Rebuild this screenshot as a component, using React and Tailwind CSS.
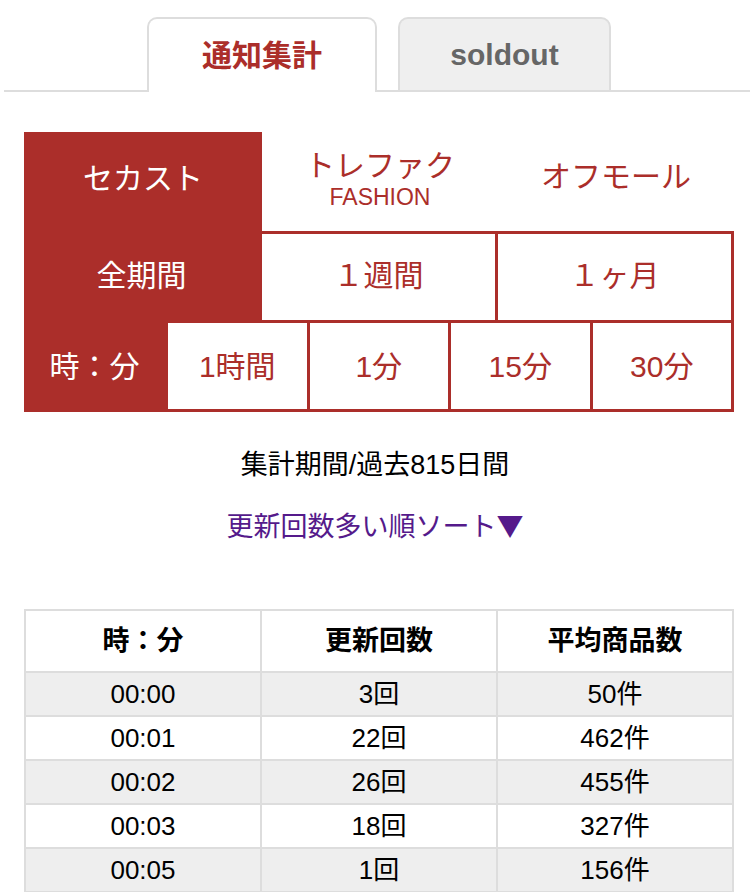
import React from "react";

const red = "text-[#ab2e2a]";

const rows = [
  ["00:00", "3回", "50件"],
  ["00:01", "22回", "462件"],
  ["00:02", "26回", "455件"],
  ["00:03", "18回", "327件"],
  ["00:05", "1回", "156件"],
];

const App = () => {
  return (
    <div className="min-h-[892px] bg-white font-['Liberation_Sans','Noto_Sans_CJK_JP',sans-serif]">
      {/* Tabs */}
      <div className="ml-1 pl-1 pt-[17px] flex justify-center gap-[21px] border-b-2 border-[#dddddd]">
        <div className="w-[230px] h-[75px] -mb-[2px] bg-white border-2 border-b-0 border-[#dddddd] rounded-t-[10px] flex items-center justify-center">
          <span className={`text-[30px] font-bold ${red}`}>通知集計</span>
        </div>
        <div className="w-[213px] h-[73px] bg-[#efefef] border-2 border-b-0 border-[#dddddd] rounded-t-[10px] flex items-center justify-center">
          <span className="text-[30px] font-bold text-[#666666]">soldout</span>
        </div>
      </div>

      {/* Filters */}
      <div className="ml-6 w-[710px] mt-[40px]">
        {/* Store row */}
        <div className="flex h-[99px]">
          <div className="w-[238px] bg-[#ab2e2a] text-white text-[30px] flex items-center justify-center pb-[6px]">
            セカスト
          </div>
          <div className={`flex-1 flex flex-col items-center justify-center leading-tight pb-[4px] ${red}`}>
            <span className="text-[30px]">トレファク</span>
            <span className="text-[23px] -mt-[1px]">FASHION</span>
          </div>
          <div className={`flex-1 flex items-center justify-center text-[30px] pb-[10px] ${red}`}>
            オフモール
          </div>
        </div>

        {/* Period + time rows */}
        <div className="bg-[#ab2e2a] pt-[3px] pr-[3px] pb-[3px] flex flex-col gap-[3px] text-[30px]">
          <div className="flex gap-[3px] h-[86px]">
            <div className="w-[235px] text-white flex items-center justify-center pb-[3px]">全期間</div>
            <div className={`flex-1 bg-white flex items-center justify-center pb-[3px] ${red}`}>１週間</div>
            <div className={`flex-1 bg-white flex items-center justify-center pb-[3px] ${red}`}>１ヶ月</div>
          </div>
          <div className="flex gap-[3px] h-[86px]">
            <div className="w-[141px] text-white flex items-center justify-center">時：分</div>
            <div className={`flex-1 bg-white flex items-center justify-center ${red}`}>1時間</div>
            <div className={`flex-1 bg-white flex items-center justify-center ${red}`}>1分</div>
            <div className={`flex-1 bg-white flex items-center justify-center ${red}`}>15分</div>
            <div className={`flex-1 bg-white flex items-center justify-center ${red}`}>30分</div>
          </div>
        </div>
      </div>

      {/* Summary */}
      <div className="mt-[33px] text-center text-[27px] leading-[40px] text-black">
        集計期間/過去815日間
      </div>
      <div className="mt-[20px] h-[40px] text-center text-[27px] leading-[40px] text-[#551a8b]">
        更新回数多い順ソート<span className="font-['Noto_Sans_CJK_JP',sans-serif]">▼</span>
      </div>

      {/* Table */}
      <div className="ml-6 w-[710px] mt-[64px] bg-[#dddddd] p-[2px] grid grid-cols-3 gap-[2px]">
        <div className="h-[60px] bg-white flex items-center justify-center text-[27px] font-bold">時：分</div>
        <div className="h-[60px] bg-white flex items-center justify-center text-[27px] font-bold">更新回数</div>
        <div className="h-[60px] bg-white flex items-center justify-center text-[27px] font-bold">平均商品数</div>
        {rows.map((r, i) =>
          r.map((c, j) => (
            <div
              key={`${i}-${j}`}
              className={`h-[42px] flex items-center justify-center text-[26px] ${
                i % 2 === 0 ? "bg-[#eeeeee]" : "bg-white"
              }`}
            >
              {c}
            </div>
          ))
        )}
      </div>
    </div>
  );
};

export default App;
